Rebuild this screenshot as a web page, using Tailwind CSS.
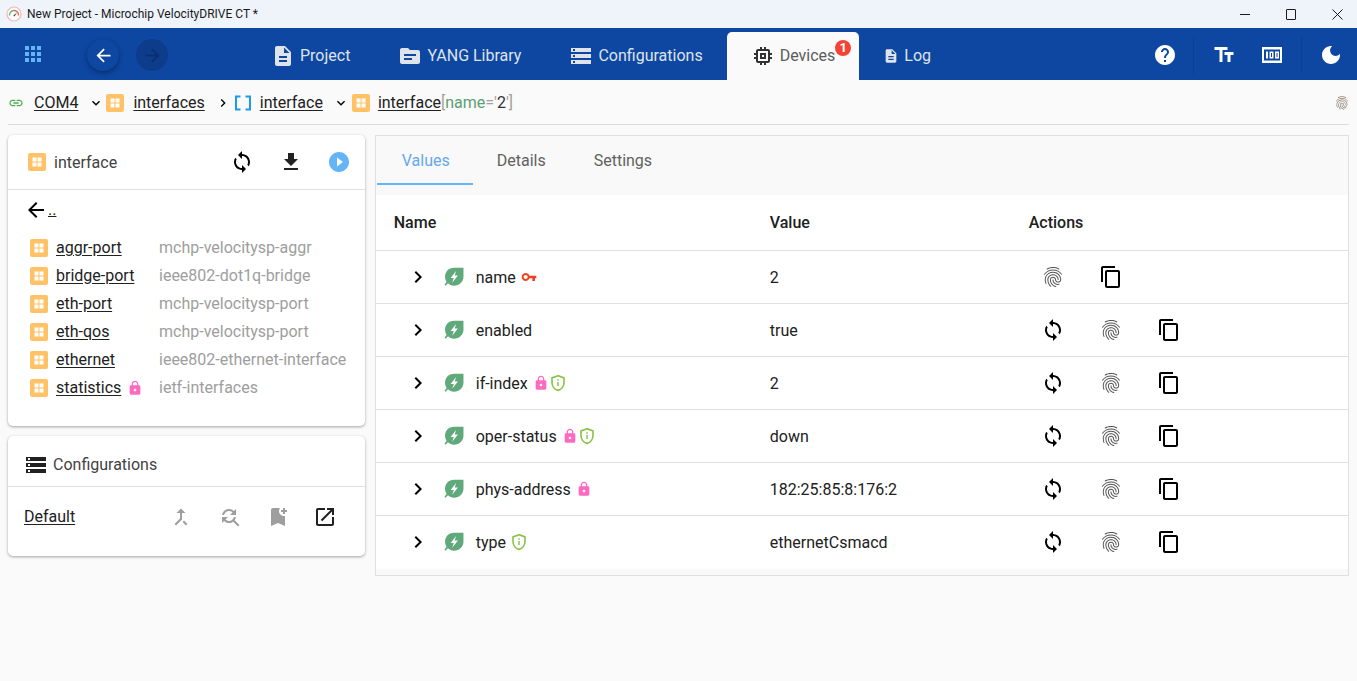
<!DOCTYPE html>
<html lang="en">
<head>
    <meta charset="UTF-8">
    <meta name="viewport" content="width=device-width, initial-scale=1.0">
    <title>New Project - Microchip VelocityDRIVE CT *</title>
    <script src="https://cdn.jsdelivr.net/npm/@tailwindcss/browser@4"></script>
</head>
<body class="h-[681px] w-[1357px] overflow-hidden bg-[#fafafa] font-['Roboto',sans-serif] text-[16px] text-[#212121]">

    <!-- icon sheet -->
    <svg class="hidden">
        <symbol id="i-apps" viewBox="0 0 24 24"><path d="M4 8h4V4H4v4zm6 12h4v-4h-4v4zm-6 0h4v-4H4v4zm0-6h4v-4H4v4zm6 0h4v-4h-4v4zm6-10v4h4V4h-4zm-6 4h4V4h-4v4zm6 6h4v-4h-4v4zm0 6h4v-4h-4v4z"/></symbol>
        <symbol id="i-back" viewBox="0 0 24 24"><path d="M20 11H7.83l5.59-5.59L12 4l-8 8 8 8 1.41-1.41L7.83 13H20v-2z"/></symbol>
        <symbol id="i-forward" viewBox="0 0 24 24"><path d="M12 4l-1.41 1.41L16.17 11H4v2h12.17l-5.58 5.59L12 20l8-8z"/></symbol>
        <symbol id="i-doc" viewBox="0 0 24 24"><path d="M14 2H6c-1.1 0-1.99.9-1.99 2L4 20c0 1.1.89 2 1.99 2H18c1.1 0 2-.9 2-2V8l-6-6zm2 16H8v-2h8v2zm0-4H8v-2h8v2zm-3-5V3.5L18.5 9H13z"/></symbol>
        <symbol id="i-topic" viewBox="0 0 24 24"><path d="M20 6h-8l-2-2H4c-1.1 0-1.99.9-1.99 2L2 18c0 1.1.9 2 2 2h16c1.1 0 2-.9 2-2V8c0-1.1-.9-2-2-2zm-6 10H6v-2h8v2zm4-4H6v-2h12v2z"/></symbol>
        <symbol id="i-storage" viewBox="0 0 24 24"><path d="M2 20h20v-4H2v4zm2-3h2v2H4v-2zM2 4v4h20V4H2zm4 3H4V5h2v2zm-4 7h20v-4H2v4zm2-3h2v2H4v-2z"/></symbol>
        <symbol id="i-memory" viewBox="0 0 24 24"><path d="M15 9H9v6h6V9zm-2 4h-2v-2h2v2zm8-2V9h-2V7c0-1.1-.9-2-2-2h-2V3h-2v2h-2V3H9v2H7c-1.1 0-2 .9-2 2v2H3v2h2v2H3v2h2v2c0 1.1.9 2 2 2h2v2h2v-2h2v2h2v-2h2c1.1 0 2-.9 2-2v-2h2v-2h-2v-2h2zm-4 6H7V7h10v10z"/></symbol>
        <symbol id="i-help" viewBox="0 0 24 24"><path d="M12 2C6.48 2 2 6.48 2 12s4.48 10 10 10 10-4.48 10-10S17.52 2 12 2zm1 17h-2v-2h2v2zm2.07-7.75l-.9.92C13.45 12.9 13 13.5 13 15h-2v-.5c0-1.1.45-2.1 1.17-2.83l1.24-1.26c.37-.36.59-.86.59-1.41 0-1.1-.9-2-2-2s-2 .9-2 2H8c0-2.21 1.79-4 4-4s4 1.79 4 4c0 .88-.36 1.68-.93 2.25z"/></symbol>
        <symbol id="i-text" viewBox="0 0 24 24"><path d="M2.5 4v3h5v12h3V7h5V4h-13zm19 5h-9v3h3v7h3v-7h3V9z"/></symbol>
        <symbol id="i-moon" viewBox="0 0 24 24"><path d="M12 3c-4.97 0-9 4.03-9 9s4.03 9 9 9 9-4.03 9-9c0-.46-.04-.92-.1-1.36-.98 1.37-2.58 2.26-4.4 2.26-2.98 0-5.4-2.42-5.4-5.4 0-1.81.89-3.42 2.26-4.4-.44-.06-.9-.1-1.36-.1z"/></symbol>
        <symbol id="i-link" viewBox="0 0 24 24"><path d="M3.9 12c0-1.71 1.39-3.1 3.1-3.1h4V7H7c-2.76 0-5 2.24-5 5s2.24 5 5 5h4v-1.9H7c-1.71 0-3.1-1.39-3.1-3.1zM8 13h8v-2H8v2zm9-6h-4v1.9h4c1.71 0 3.1 1.39 3.1 3.1s-1.39 3.1-3.1 3.1h-4V17h4c2.76 0 5-2.24 5-5s-2.24-5-5-5z"/></symbol>
        <symbol id="i-sync" viewBox="0 0 24 24"><path d="M12 4V1L8 5l4 4V6c3.31 0 6 2.69 6 6 0 1.01-.25 1.97-.7 2.8l1.46 1.46C19.54 15.03 20 13.57 20 12c0-4.42-3.58-8-8-8zm0 14c-3.31 0-6-2.69-6-6 0-1.01.25-1.97.7-2.8L5.24 7.74C4.46 8.97 4 10.43 4 12c0 4.42 3.58 8 8 8v3l4-4-4-4v3z"/></symbol>
        <symbol id="i-download" viewBox="0 0 24 24"><path d="M19 9h-4V3H9v6H5l7 7 7-7zM5 18v2h14v-2H5z"/></symbol>
        <symbol id="i-play" viewBox="0 0 24 24"><path d="M12 2C6.48 2 2 6.48 2 12s4.48 10 10 10 10-4.48 10-10S17.52 2 12 2zm-2 14.5v-9l6 4.5-6 4.5z"/></symbol>
        <symbol id="i-lock" viewBox="0 0 24 24"><path d="M18 8h-1V6c0-2.76-2.24-5-5-5S7 3.24 7 6v2H6c-1.1 0-2 .9-2 2v10c0 1.1.9 2 2 2h12c1.1 0 2-.9 2-2V10c0-1.1-.9-2-2-2zm-6 9c-1.1 0-2-.9-2-2s.9-2 2-2 2 .9 2 2-.9 2-2 2zm3.1-9H8.9V6c0-1.71 1.39-3.1 3.1-3.1 1.71 0 3.1 1.39 3.1 3.1v2z"/></symbol>
        <symbol id="i-key" viewBox="0 0 24 24"><path d="M12.65 10C11.83 7.67 9.61 6 7 6c-3.31 0-6 2.69-6 6s2.69 6 6 6c2.61 0 4.83-1.67 5.65-4H17v4h4v-4h2v-4H12.65zM7 15c-1.66 0-3-1.34-3-3s1.34-3 3-3 3 1.34 3 3-1.34 3-3 3z"/></symbol>
        <symbol id="i-copy" viewBox="0 0 24 24"><path d="M16 1H4c-1.1 0-2 .9-2 2v14h2V3h12V1zm3 4H8c-1.1 0-2 .9-2 2v14c0 1.1.9 2 2 2h11c1.1 0 2-.9 2-2V7c0-1.1-.9-2-2-2zm0 16H8V7h11v14z"/></symbol>
        <symbol id="i-right" viewBox="0 0 24 24"><path d="M10 6L8.59 7.41 13.17 12l-4.58 4.59L10 18l6-6z"/></symbol>
        <symbol id="i-more" viewBox="0 0 24 24"><path d="M16.59 8.59L12 13.17 7.41 8.59 6 10l6 6 6-6z"/></symbol>
        <symbol id="i-open" viewBox="0 0 24 24"><path d="M19 19H5V5h7V3H5c-1.11 0-2 .9-2 2v14c0 1.1.89 2 2 2h14c1.1 0 2-.9 2-2v-7h-2v7zM14 3v2h3.59l-9.83 9.83 1.41 1.41L19 6.41V10h2V3h-7z"/></symbol>
        <symbol id="i-merge" viewBox="0 0 24 24"><path d="M17 20.41 18.41 19 15 15.59 13.59 17 17 20.41zM7.5 8H11v5.59L5.59 19 7 20.41l6-6V8h3.5L12 3.5 7.5 8z"/></symbol>
        <symbol id="i-replace" viewBox="0 0 24 24"><path d="M11 6c1.38 0 2.63.56 3.54 1.46L12 10h6V4l-2.05 2.05C14.68 4.78 12.93 4 11 4c-3.53 0-6.43 2.61-6.92 6H6.1c.46-2.28 2.48-4 4.9-4zm5.64 9.14c.66-.9 1.12-1.97 1.28-3.14H15.9c-.46 2.28-2.48 4-4.9 4-1.38 0-2.63-.56-3.54-1.46L10 12H4v6l2.05-2.05C7.32 17.22 9.07 18 11 18c1.55 0 2.98-.51 4.14-1.36L20 21.49 21.49 20l-4.85-4.86z"/></symbol>
        <symbol id="i-bookmark" viewBox="0 0 24 24"><path d="M21 7h-2v2h-2V7h-2V5h2V3h2v2h2v2zm-2 14-7-3-7 3V5c0-1.1.9-2 2-2h7c-.63.84-1 1.87-1 3 0 2.76 2.24 5 5 5 .34 0 .68-.03 1-.1V21z"/></symbol>
        <symbol id="i-finger" viewBox="0 0 24 24"><path d="M17.81 4.47c-.08 0-.16-.02-.23-.06C15.66 3.42 14 3 12.01 3c-1.98 0-3.86.47-5.57 1.41-.24.13-.54.04-.68-.2-.13-.24-.04-.55.2-.68C7.82 2.52 9.86 2 12.01 2c2.13 0 3.99.47 6.03 1.52.25.13.34.43.21.67-.09.18-.26.28-.44.28zM3.5 9.72c-.1 0-.2-.03-.29-.09-.23-.16-.28-.47-.12-.7.99-1.4 2.25-2.5 3.75-3.27C9.98 4.04 14 4.03 17.15 5.65c1.5.77 2.76 1.86 3.75 3.25.16.22.11.54-.12.7-.23.16-.54.11-.7-.12-.9-1.26-2.04-2.25-3.39-2.94-2.87-1.47-6.54-1.47-9.4.01-1.36.7-2.5 1.7-3.4 2.96-.08.14-.23.21-.39.21zm6.25 12.07c-.13 0-.26-.05-.35-.15-.87-.87-1.34-1.43-2.01-2.64-.69-1.23-1.05-2.73-1.05-4.34 0-2.97 2.54-5.39 5.66-5.39s5.66 2.42 5.66 5.39c0 .28-.22.5-.5.5s-.5-.22-.5-.5c0-2.42-2.09-4.39-4.66-4.39s-4.66 1.97-4.66 4.39c0 1.44.32 2.77.93 3.85.64 1.15 1.08 1.64 1.85 2.42.19.2.19.51 0 .71-.11.1-.24.15-.37.15zm7.17-1.85c-1.19 0-2.24-.3-3.1-.89-1.49-1.01-2.38-2.65-2.38-4.39 0-.28.22-.5.5-.5s.5.22.5.5c0 1.41.72 2.74 1.94 3.56.71.48 1.54.71 2.54.71.24 0 .64-.03 1.04-.1.27-.05.53.13.58.41.05.27-.13.53-.41.58-.57.11-1.07.12-1.21.12zM14.91 22c-.04 0-.09-.01-.13-.02-1.59-.44-2.63-1.03-3.72-2.1-1.4-1.39-2.17-3.24-2.17-5.22 0-1.62 1.38-2.94 3.08-2.94s3.08 1.32 3.08 2.94c0 1.07.93 1.94 2.08 1.94s2.08-.87 2.08-1.94c0-3.77-3.25-6.83-7.25-6.83-2.84 0-5.44 1.58-6.61 4.03-.39.81-.59 1.76-.59 2.8 0 .78.07 2.01.67 3.61.1.26-.03.55-.29.64-.26.1-.55-.04-.64-.29-.49-1.31-.73-2.61-.73-3.96 0-1.2.23-2.29.68-3.24 1.33-2.79 4.28-4.6 7.51-4.6 4.55 0 8.25 3.51 8.25 7.83 0 1.62-1.38 2.94-3.08 2.94s-3.08-1.32-3.08-2.94c0-1.07-.93-1.94-2.08-1.94s-2.08.87-2.08 1.94c0 1.71.66 3.31 1.87 4.51.95.94 1.86 1.46 3.27 1.85.27.07.42.35.35.61-.05.23-.26.38-.47.38z"/></symbol>
        <symbol id="i-grid" viewBox="0 0 18 18"><rect width="18" height="18" rx="2" fill="#ffc266"/><path fill="#fff" d="M4.500 4.500h4v4h-4zM9.500 4.500h4v4h-4zM4.500 9.500h4v4h-4zM9.500 9.500h4v4h-4z"/></symbol>
        <symbol id="i-array" viewBox="0 0 18 18"><path fill="#1e9be8" d="M1 1.500h5.500v2H3v11h3.500v2H1zM17 1.500h-5.500v2H15v11h-3.500v2H17z"/></symbol>
        <symbol id="i-leaf" viewBox="0.500 0.500 19 18.500"><path fill="#5fa97a" d="M19 1H10C5 1 1.500 4.800 1.500 9.500c0 1.900.6 3.500 1.500 4.800L1 17l1 1 2.300-2.400C5.800 17.100 7.800 18 10 18c5 0 9-3.800 9-8.500V1z"/><path fill="#fff" d="M12 4 6.800 10.700h3L8.300 15.300l5.400-6.900h-3L12 4z"/></symbol>
        <symbol id="i-shield" viewBox="0 0 24 24"><path fill="none" stroke="#8bc34a" stroke-width="2.200" d="M12 2.200 4 5.200v6c0 4.900 3.300 9.300 8 10.600 4.700-1.300 8-5.700 8-10.600v-6z"/><path fill="#8bc34a" d="M11 7h2v2h-2zM11 10.500h2V16h-2z"/></symbol>
        <symbol id="i-counter" viewBox="0 0 20 16"><path fill-rule="evenodd" d="M0 0h20v16H0zM2 2.500v11h16v-11z"/><path fill-rule="evenodd" d="M4 4.500h2v7H4zM7.500 4.500h4v7h-4zM9 6v4h1V6zM13 4.500h4v7h-4zM14.500 6v4h1V6z"/></symbol>
    </svg>

    <!-- window title bar -->
    <div class="flex h-[28px] items-center bg-[#eff4fb] pl-[6px] text-[12px] text-[#1a1a1a]">
        <svg class="h-[16px] w-[16px]" viewBox="0 0 16 16">
            <circle cx="8" cy="8" r="7" fill="#fff" stroke="#f0b8ae" stroke-width="1.200"/>
            <path d="M3.500 9.500A4.500 4.500 0 0 1 8 4.500" fill="none" stroke="#6fb06f" stroke-width="1.400"/>
            <path d="M8 4.500a4.500 4.500 0 0 1 4.500 5" fill="none" stroke="#e8694a" stroke-width="1.400"/>
            <path d="M7.300 9.500 11 6.500 8.500 10.500z" fill="#444"/>
        </svg>
        <span class="ml-[5px]">New Project - Microchip VelocityDRIVE CT *</span>
        <div class="-mr-[3px] ml-auto flex items-center">
            <div class="flex w-[46px] justify-center"><span class="h-px w-[10px] bg-[#1a1a1a]"></span></div>
            <div class="flex w-[46px] justify-center"><span class="h-[11px] w-[10px] rounded-[1px] border border-[#1a1a1a]"></span></div>
            <div class="flex w-[46px] justify-center">
                <svg class="h-[11px] w-[11px] stroke-[#1a1a1a]" viewBox="0 0 11 11"><path d="M.5.500l10 10M10.500.500l-10 10" fill="none"/></svg>
            </div>
        </div>
    </div>

    <!-- app nav -->
    <nav class="flex h-[52px] items-stretch bg-[#0d47a1] text-[#dfe3ea]">
        <div class="flex w-[247px] items-center pt-[2px]">
            <svg class="ml-[21px] -mt-[2px] h-[24px] w-[24px] fill-[#64b5f6]"><use href="#i-apps"/></svg>
            <button class="ml-[42px] flex h-[32px] w-[32px] items-center justify-center rounded-full bg-[#0d47a1] fill-white shadow-[0_2px_5px_rgba(0,0,0,0.35)]">
                <svg class="h-[21px] w-[21px]"><use href="#i-back"/></svg>
            </button>
            <button class="ml-[17px] flex h-[32px] w-[32px] items-center justify-center rounded-full bg-[#0c3c8a] fill-[#0a2f6f]">
                <svg class="h-[21px] w-[21px]"><use href="#i-forward"/></svg>
            </button>
        </div>
        <a class="flex items-center gap-[5px] px-[24px] pt-[4px]">
            <svg class="h-[24px] w-[24px] fill-[#dfe3ea]"><use href="#i-doc"/></svg>Project
        </a>
        <a class="flex items-center gap-[5px] px-[24px] pt-[4px]">
            <svg class="h-[24px] w-[24px] fill-[#dfe3ea]"><use href="#i-topic"/></svg>YANG Library
        </a>
        <a class="flex items-center gap-[5px] px-[24px] pt-[4px]">
            <svg class="h-[24px] w-[24px] fill-[#dfe3ea]"><use href="#i-storage"/></svg>Configurations
        </a>
        <a class="relative mt-[4px] flex items-center gap-[5px] rounded-t-[5px] bg-[#fafafa] px-[24px] text-[#5c5c5c]">
            <svg class="h-[24px] w-[24px] fill-[#333]"><use href="#i-memory"/></svg>Devices
            <span class="absolute top-[8px] right-[8px] flex h-[16px] w-[16px] items-center justify-center rounded-full bg-[#f44336] text-[13px] font-bold text-white">1</span>
        </a>
        <a class="flex items-center gap-[5px] px-[24px] pt-[4px]">
            <svg class="h-[16px] w-[16px] fill-[#dfe3ea]"><use href="#i-doc"/></svg>Log
        </a>
        <div class="ml-auto flex items-center fill-white pt-[2px]">
            <svg class="h-[24px] w-[24px]"><use href="#i-help"/></svg>
            <span class="mr-[18px] ml-[16px] h-[38px] w-px bg-[#0c3f90]"></span>
            <svg class="h-[24px] w-[24px]"><use href="#i-text"/></svg>
            <svg class="ml-[26px] h-[16px] w-[20px]"><use href="#i-counter"/></svg>
            <span class="mr-[17px] ml-[19px] h-[38px] w-px bg-[#0c3f90]"></span>
            <svg class="mr-[14px] h-[24px] w-[24px]"><use href="#i-moon"/></svg>
        </div>
    </nav>

    <!-- breadcrumb -->
    <div class="mx-[8px] flex h-[45px] items-center border-b border-[#dcdcdc] pt-[1px]">
        <svg class="h-[16px] w-[16px] fill-[#4caf50]"><use href="#i-link"/></svg>
        <a class="ml-[10px] underline underline-offset-2">COM4</a>
        <svg class="ml-[10px] h-[16px] w-[16px]"><use href="#i-more"/></svg>
        <svg class="ml-[2px] h-[18px] w-[18px]"><use href="#i-grid"/></svg>
        <a class="ml-[9px] underline underline-offset-2">interfaces</a>
        <svg class="ml-[10px] h-[16px] w-[16px]"><use href="#i-right"/></svg>
        <svg class="ml-[3px] h-[18px] w-[18px]"><use href="#i-array"/></svg>
        <a class="ml-[8px] underline underline-offset-2">interface</a>
        <svg class="ml-[10px] h-[16px] w-[16px]"><use href="#i-more"/></svg>
        <svg class="ml-[3px] h-[18px] w-[18px]"><use href="#i-grid"/></svg>
        <a class="ml-[8px] underline underline-offset-2">interface</a>
        <span class="text-[#a8a096]">[<span class="text-[#5a9e72]">name</span>='<span class="text-[#333]">2</span>']</span>
        <svg class="-mr-[1px] ml-auto h-[16px] w-[16px] fill-[#8c7f6f]"><use href="#i-finger"/></svg>
    </div>

    <!-- main -->
    <main class="flex items-start px-[8px] pt-[10px]">

        <!-- left column -->
        <div class="w-[357px]">
            <section class="h-[291px] rounded-[5px] bg-white shadow-[0_1px_3px_rgba(0,0,0,0.35)]">
                <header class="flex h-[55px] items-center border-b border-[#e0e0e0] pl-[20px] text-[#424242]">
                    <svg class="h-[18px] w-[18px]"><use href="#i-grid"/></svg>
                    <span class="ml-[8px] pt-[2px]">interface</span>
                    <svg class="ml-auto h-[24px] w-[24px]"><use href="#i-sync"/></svg>
                    <svg class="ml-[25px] h-[24px] w-[24px] fill-[#212121]"><use href="#i-download"/></svg>
                    <svg class="mr-[14px] ml-[24px] h-[24px] w-[24px] fill-[#64b5f6]"><use href="#i-play"/></svg>
                </header>
                <div class="flex h-[40px] items-center pl-[16px]">
                    <svg class="h-[24px] w-[24px] fill-black"><use href="#i-back"/></svg>
                    <a class="underline">..</a>
                </div>
                <ul class="mt-[4px] pl-[22px]">
                    <li class="flex h-[28px] items-center"><svg class="h-[18px] w-[18px]"><use href="#i-grid"/></svg><span class="ml-[8px] flex w-[103px] items-center"><a class="underline underline-offset-2">aggr-port</a></span><span class="text-[#9e9e9e]">mchp-velocitysp-aggr</span></li>
                    <li class="flex h-[28px] items-center"><svg class="h-[18px] w-[18px]"><use href="#i-grid"/></svg><span class="ml-[8px] flex w-[103px] items-center"><a class="underline underline-offset-2">bridge-port</a></span><span class="text-[#9e9e9e]">ieee802-dot1q-bridge</span></li>
                    <li class="flex h-[28px] items-center"><svg class="h-[18px] w-[18px]"><use href="#i-grid"/></svg><span class="ml-[8px] flex w-[103px] items-center"><a class="underline underline-offset-2">eth-port</a></span><span class="text-[#9e9e9e]">mchp-velocitysp-port</span></li>
                    <li class="flex h-[28px] items-center"><svg class="h-[18px] w-[18px]"><use href="#i-grid"/></svg><span class="ml-[8px] flex w-[103px] items-center"><a class="underline underline-offset-2">eth-qos</a></span><span class="text-[#9e9e9e]">mchp-velocitysp-port</span></li>
                    <li class="flex h-[28px] items-center"><svg class="h-[18px] w-[18px]"><use href="#i-grid"/></svg><span class="ml-[8px] flex w-[103px] items-center"><a class="underline underline-offset-2">ethernet</a></span><span class="text-[#9e9e9e]">ieee802-ethernet-interface</span></li>
                    <li class="flex h-[28px] items-center"><svg class="h-[18px] w-[18px]"><use href="#i-grid"/></svg><span class="ml-[8px] flex w-[103px] items-center"><a class="underline underline-offset-2">statistics</a><svg class="ml-[6px] h-[16px] w-[16px] fill-[#ff69c0]"><use href="#i-lock"/></svg></span><span class="text-[#9e9e9e]">ietf-interfaces</span></li>
                </ul>
            </section>

            <section class="mt-[10px] h-[120px] rounded-[5px] bg-white shadow-[0_1px_3px_rgba(0,0,0,0.35)]">
                <header class="flex h-[51px] items-center border-b border-[#e0e0e0] pl-[16px] pt-[8px] text-[#424242]">
                    <svg class="h-[24px] w-[24px] fill-[#212121]"><use href="#i-storage"/></svg>
                    <span class="ml-[5px]">Configurations</span>
                </header>
                <div class="flex h-[60px] items-center pl-[16px]">
                    <a class="underline underline-offset-2">Default</a>
                    <svg class="ml-auto h-[24px] w-[24px] fill-[#9e9e9e]"><use href="#i-merge"/></svg>
                    <svg class="ml-[25px] h-[24px] w-[24px] fill-[#9e9e9e]"><use href="#i-replace"/></svg>
                    <svg class="ml-[24px] h-[24px] w-[24px] fill-[#9e9e9e]"><use href="#i-bookmark"/></svg>
                    <svg class="mr-[28px] ml-[23px] h-[24px] w-[24px] fill-[#212121]"><use href="#i-open"/></svg>
                </div>
            </section>
        </div>

        <!-- right panel -->
        <section class="ml-[10px] h-[441px] w-[975px] border border-[#e0e0e0] bg-[#f9f9f9]">
            <div class="flex h-[49px] pl-[1px]">
                <a class="flex items-center border-y-2 border-t-transparent border-b-[#64b5f6] pr-[23px] pl-[25px] text-[#64a9ec]">Values</a>
                <a class="flex items-center px-[24px] text-[#616161]">Details</a>
                <a class="flex items-center px-[24px] text-[#616161]">Settings</a>
            </div>
            <div class="mt-[10px] bg-white">
                <div class="grid h-[56px] grid-cols-[394px_259px_1fr] items-center border-b border-[#e0e0e0] pt-[1px] font-medium">
                    <span class="pl-[18px]">Name</span><span>Value</span><span>Actions</span>
                </div>

                <div class="grid h-[53px] grid-cols-[394px_259px_1fr] items-center border-b border-[#e0e0e0]">
                    <div class="flex items-center pl-[30px]">
                        <svg class="h-[24px] w-[24px]"><use href="#i-right"/></svg>
                        <svg class="ml-[14px] h-[20px] w-[20px]"><use href="#i-leaf"/></svg>
                        <span class="ml-[12px] pt-[2px]">name</span>
                        <svg class="ml-[5px] h-[16px] w-[16px] fill-[#f4401f]"><use href="#i-key"/></svg>
                    </div>
                    <span class="pt-[2px]">2</span>
                    <div class="flex items-center gap-[34px] pl-[12px]">
                        <svg class="h-[24px] w-[24px] fill-[#555]"><use href="#i-finger"/></svg>
                        <svg class="h-[24px] w-[24px]"><use href="#i-copy"/></svg>
                    </div>
                </div>

                <div class="grid h-[53px] grid-cols-[394px_259px_1fr] items-center border-b border-[#e0e0e0]">
                    <div class="flex items-center pl-[30px]">
                        <svg class="h-[24px] w-[24px]"><use href="#i-right"/></svg>
                        <svg class="ml-[14px] h-[20px] w-[20px]"><use href="#i-leaf"/></svg>
                        <span class="ml-[12px] pt-[2px]">enabled</span>
                    </div>
                    <span class="pt-[2px]">true</span>
                    <div class="flex items-center gap-[34px] pl-[12px]">
                        <svg class="h-[24px] w-[24px]"><use href="#i-sync"/></svg>
                        <svg class="h-[24px] w-[24px] fill-[#555]"><use href="#i-finger"/></svg>
                        <svg class="h-[24px] w-[24px]"><use href="#i-copy"/></svg>
                    </div>
                </div>

                <div class="grid h-[53px] grid-cols-[394px_259px_1fr] items-center border-b border-[#e0e0e0]">
                    <div class="flex items-center pl-[30px]">
                        <svg class="h-[24px] w-[24px]"><use href="#i-right"/></svg>
                        <svg class="ml-[14px] h-[20px] w-[20px]"><use href="#i-leaf"/></svg>
                        <span class="ml-[12px] pt-[2px]">if-index</span>
                        <svg class="ml-[5px] h-[16px] w-[16px] fill-[#ff69c0]"><use href="#i-lock"/></svg>
                        <svg class="h-[18px] w-[18px]"><use href="#i-shield"/></svg>
                    </div>
                    <span class="pt-[2px]">2</span>
                    <div class="flex items-center gap-[34px] pl-[12px]">
                        <svg class="h-[24px] w-[24px]"><use href="#i-sync"/></svg>
                        <svg class="h-[24px] w-[24px] fill-[#555]"><use href="#i-finger"/></svg>
                        <svg class="h-[24px] w-[24px]"><use href="#i-copy"/></svg>
                    </div>
                </div>

                <div class="grid h-[53px] grid-cols-[394px_259px_1fr] items-center border-b border-[#e0e0e0]">
                    <div class="flex items-center pl-[30px]">
                        <svg class="h-[24px] w-[24px]"><use href="#i-right"/></svg>
                        <svg class="ml-[14px] h-[20px] w-[20px]"><use href="#i-leaf"/></svg>
                        <span class="ml-[12px] pt-[2px]">oper-status</span>
                        <svg class="ml-[5px] h-[16px] w-[16px] fill-[#ff69c0]"><use href="#i-lock"/></svg>
                        <svg class="h-[18px] w-[18px]"><use href="#i-shield"/></svg>
                    </div>
                    <span class="pt-[2px]">down</span>
                    <div class="flex items-center gap-[34px] pl-[12px]">
                        <svg class="h-[24px] w-[24px]"><use href="#i-sync"/></svg>
                        <svg class="h-[24px] w-[24px] fill-[#555]"><use href="#i-finger"/></svg>
                        <svg class="h-[24px] w-[24px]"><use href="#i-copy"/></svg>
                    </div>
                </div>

                <div class="grid h-[53px] grid-cols-[394px_259px_1fr] items-center border-b border-[#e0e0e0]">
                    <div class="flex items-center pl-[30px]">
                        <svg class="h-[24px] w-[24px]"><use href="#i-right"/></svg>
                        <svg class="ml-[14px] h-[20px] w-[20px]"><use href="#i-leaf"/></svg>
                        <span class="ml-[12px] pt-[2px]">phys-address</span>
                        <svg class="ml-[5px] h-[16px] w-[16px] fill-[#ff69c0]"><use href="#i-lock"/></svg>
                    </div>
                    <span class="pt-[2px]">182:25:85:8:176:2</span>
                    <div class="flex items-center gap-[34px] pl-[12px]">
                        <svg class="h-[24px] w-[24px]"><use href="#i-sync"/></svg>
                        <svg class="h-[24px] w-[24px] fill-[#555]"><use href="#i-finger"/></svg>
                        <svg class="h-[24px] w-[24px]"><use href="#i-copy"/></svg>
                    </div>
                </div>

                <div class="grid h-[53px] grid-cols-[394px_259px_1fr] items-center pb-[2px]">
                    <div class="flex items-center pl-[30px]">
                        <svg class="h-[24px] w-[24px]"><use href="#i-right"/></svg>
                        <svg class="ml-[14px] h-[20px] w-[20px]"><use href="#i-leaf"/></svg>
                        <span class="ml-[12px] pt-[2px]">type</span>
                        <svg class="ml-[4px] h-[18px] w-[18px]"><use href="#i-shield"/></svg>
                    </div>
                    <span class="pt-[2px]">ethernetCsmacd</span>
                    <div class="flex items-center gap-[34px] pl-[12px]">
                        <svg class="h-[24px] w-[24px]"><use href="#i-sync"/></svg>
                        <svg class="h-[24px] w-[24px] fill-[#555]"><use href="#i-finger"/></svg>
                        <svg class="h-[24px] w-[24px]"><use href="#i-copy"/></svg>
                    </div>
                </div>
            </div>
        </section>
    </main>
</body>
</html>
